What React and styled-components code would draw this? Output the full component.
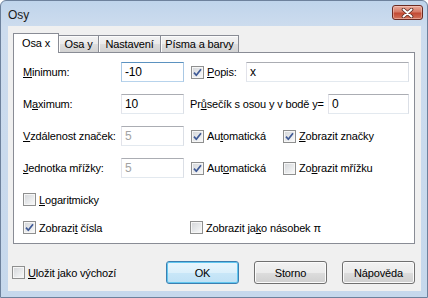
import styled, { createGlobalStyle } from "styled-components";

const GlobalStyle = createGlobalStyle`
  html, body {
    margin: 0;
    padding: 0;
    background: #fff;
  }
  body {
    font-family: "Liberation Sans", Arial, sans-serif;
    font-size: 11px;
    letter-spacing: -0.15px;
    color: #000;
  }
`;

const Window = styled.div`
  box-sizing: border-box;
  width: 428px;
  height: 298px;
  display: flex;
  flex-direction: column;
  padding: 0 6px 6px 7px;
  border: 1px solid #6d819c;
  border-radius: 6px 6px 0 0;
  background: linear-gradient(#bfd4eb, #cddcee 26px, #c6d8ec);
`;

const TitleBar = styled.div`
  height: 25px;
  display: flex;
  align-items: center;
  flex: none;
`;

const Title = styled.div`
  font-size: 12px;
  letter-spacing: 0;
  color: #1b1b1b;
  margin-top: 2px;
`;

const CloseButton = styled.div`
  box-sizing: border-box;
  width: 31px;
  height: 15px;
  margin: 4px -2px 0 auto;
  align-self: flex-start;
  border: 1px solid #6a2a22;
  border-radius: 3px;
  background: linear-gradient(#e9aa9c, #d67a66 45%, #c24a34 55%, #d3735b);
  box-shadow: inset 0 0 0 1px rgba(255, 220, 210, 0.45);
  display: flex;
  align-items: center;
  justify-content: center;
`;

const Client = styled.div`
  flex: 1;
  background: #f0f0f0;
  padding: 7px 6px 0 5px;
  display: flex;
  flex-direction: column;
`;

const TabStrip = styled.div`
  display: flex;
  align-items: flex-end;
  height: 20px;
  margin-bottom: -1px;
  position: relative;
  z-index: 1;
`;

const Tab = styled.div`
  box-sizing: border-box;
  width: ${(p) => p.$w}px;
  height: ${(p) => (p.$active ? 20 : 18)}px;
  margin-left: ${(p) => (p.$first ? 0 : -1)}px;
  border: 1px solid #898c95;
  border-bottom: ${(p) => (p.$active ? "none" : "1px solid #898c95")};
  background: ${(p) =>
    p.$active
      ? "#fff"
      : "linear-gradient(#f3f3f3, #ebebeb 50%, #dedede 51%, #d2d2d2)"};
  box-shadow: ${(p) => (p.$active ? "none" : "inset 1px 1px 0 #fcfcfc")};
  display: flex;
  align-items: center;
  justify-content: center;
  padding-bottom: ${(p) => (p.$active ? 1 : 0)}px;
`;

const Panel = styled.div`
  box-sizing: border-box;
  height: 192px;
  border: 1px solid #898c95;
  background: #fff;
  padding: 9px 5px 0 9px;
`;

const Grid = styled.div`
  display: grid;
  grid-template-columns: 98px 70px 92px 1fr;
  grid-auto-rows: ${(p) => p.$row}px;
  row-gap: ${(p) => p.$gap}px;
  padding-top: ${(p) => p.$top || 0}px;
  align-items: center;
`;

const Label = styled.div`
  white-space: nowrap;
  margin-left: ${(p) => p.$shift || 0}px;
`;

const Key = styled.span`
  text-decoration: underline;
  text-underline-offset: 1px;
`;

const TextBox = styled.div`
  box-sizing: border-box;
  width: ${(p) => p.$w}px;
  height: 20px;
  margin-left: ${(p) => (p.$push ? "auto" : "0")};
  padding: 0 3px;
  display: flex;
  align-items: center;
  font-size: 12px;
  background: #fff;
  color: ${(p) => (p.$disabled ? "#a3a3a3" : "#000")};
  border: 1px solid;
  border-color: ${(p) =>
    p.$focused
      ? "#5b92c0 #a9c8e4 #b7d3ec #a9c8e4"
      : "#abadb3 #dbdfe6 #e3e9ef #e2e3ea"};
`;

const Span = styled.div`
  grid-column: 3 / 5;
  display: flex;
  align-items: center;
`;

const CheckItem = styled.label`
  display: inline-flex;
  align-items: center;
  gap: 3px;
  white-space: nowrap;
  grid-column: ${(p) => p.$col || "auto"};
  margin-left: ${(p) => p.$shift || 0}px;
`;

const Box = styled.span`
  box-sizing: border-box;
  width: 13px;
  height: 13px;
  flex: none;
  border: 1px solid #8e8f8f;
  background: linear-gradient(135deg, #d3d5d8 0%, #e6e8ea 50%, #fbfbfb 100%);
  box-shadow: inset 0 0 0 1px #f6f6f6;
  display: flex;
  align-items: center;
  justify-content: center;
`;

const BottomBar = styled.div`
  display: flex;
  align-items: center;
  height: 23px;
  margin-top: 17px;
`;

const Buttons = styled.div`
  display: flex;
  gap: 15px;
  margin-left: auto;
`;

const Button = styled.div`
  box-sizing: border-box;
  width: 73px;
  height: 23px;
  border: 1px solid ${(p) => (p.$default ? "#3c7fb1" : "#707070")};
  border-radius: 3px;
  background: ${(p) =>
    p.$default
      ? "linear-gradient(#eaf6fd, #dcf0fb 50%, #c9e7f8 51%, #bfe1f5)"
      : "linear-gradient(#f2f2f2, #ebebeb 50%, #dddddd 51%, #cfcfcf)"};
  box-shadow: inset 0 0 0 1px ${(p) => (p.$default ? "#62c7ef" : "#fbfbfb")};
  display: flex;
  align-items: center;
  justify-content: center;
  font-size: 11px;
`;

const Check = ({ on }) => (
  <Box>
    {on && (
      <svg width="11" height="11" viewBox="0 0 11 11">
        <path
          d="M2 5.6 L4.3 8.3 L9 2.2"
          fill="none"
          stroke="#3f5a96"
          strokeWidth="1.7"
          strokeLinejoin="round"
        />
      </svg>
    )}
  </Box>
);

const CloseGlyph = () => (
  <svg width="13" height="10" viewBox="0 0 13 10">
    <path d="M2.5 1.5 L10.5 8.5 M10.5 1.5 L2.5 8.5" stroke="#5b2a22" strokeWidth="3.6" strokeLinecap="round" />
    <path d="M2.5 1.5 L10.5 8.5 M10.5 1.5 L2.5 8.5" stroke="#fff" strokeWidth="2" strokeLinecap="round" />
  </svg>
);

const App = () => (
  <>
    <GlobalStyle />
    <Window>
      <TitleBar>
        <Title>Osy</Title>
        <CloseButton>
          <CloseGlyph />
        </CloseButton>
      </TitleBar>
      <Client>
        <TabStrip>
          <Tab $active $first $w={46}>Osa x</Tab>
          <Tab $w={41}>Osa y</Tab>
          <Tab $w={63}>Nastavení</Tab>
          <Tab $w={79}>Písma a barvy</Tab>
        </TabStrip>
        <Panel>
          <Grid $row={20} $gap={12}>
            <Label>
              <Key>M</Key>inimum:
            </Label>
            <TextBox $w={63} $focused>-10</TextBox>
            <Span>
              <CheckItem>
                <Check on />
                <span>
                  <Key>P</Key>opis:
                </span>
              </CheckItem>
              <TextBox $w={163} $push>x</TextBox>
            </Span>

            <Label>
              M<Key>a</Key>ximum:
            </Label>
            <TextBox $w={63}>10</TextBox>
            <Span>
              <Label $shift={-1}>
                Pr<Key>ů</Key>sečík s osou y v bodě y=
              </Label>
              <TextBox $w={81} $push>0</TextBox>
            </Span>

            <Label>
              <Key>V</Key>zdálenost značek:
            </Label>
            <TextBox $w={63} $disabled>5</TextBox>
            <CheckItem>
              <Check on />
              <span>
                Au<Key>t</Key>omatická
              </span>
            </CheckItem>
            <CheckItem>
              <Check on />
              <span>
                <Key>Z</Key>obrazit značky
              </span>
            </CheckItem>

            <Label>
              <Key>J</Key>ednotka mřížky:
            </Label>
            <TextBox $w={63} $disabled>5</TextBox>
            <CheckItem>
              <Check on />
              <span>
                Aut<Key>o</Key>matická
              </span>
            </CheckItem>
            <CheckItem>
              <Check />
              <span>
                Zo<Key>b</Key>razit mřížku
              </span>
            </CheckItem>
          </Grid>
          <Grid $row={13} $gap={15} $top={15}>
            <CheckItem $col="1 / -1">
              <Check />
              <span>
                <Key>L</Key>ogaritmicky
              </span>
            </CheckItem>
            <CheckItem $col="1 / 3">
              <Check on />
              <span>
                Zobrazi<Key>t</Key> čísla
              </span>
            </CheckItem>
            <CheckItem $col="3 / 5" $shift={-1}>
              <Check />
              <span>
                Zobrazit ja<Key>k</Key>o násobek π
              </span>
            </CheckItem>
          </Grid>
        </Panel>
        <BottomBar>
          <CheckItem $shift={-1}>
            <Check />
            <span>
              <Key>U</Key>ložit jako výchozí
            </span>
          </CheckItem>
          <Buttons>
            <Button $default>OK</Button>
            <Button>Storno</Button>
            <Button>Nápověda</Button>
          </Buttons>
        </BottomBar>
      </Client>
    </Window>
  </>
);

export default App;
